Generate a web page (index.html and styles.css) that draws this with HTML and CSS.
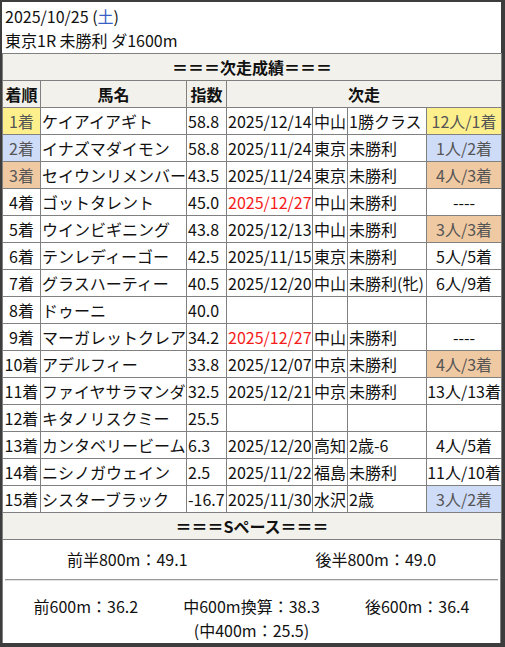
FILE: index.html
```html
<!DOCTYPE html>
<html lang="ja">
<head>
<meta charset="utf-8">
<link rel="stylesheet" href="styles.css">
</head>
<body>
<div class="card">
  <div class="head">
    <div>2025/10/25 (<span class="sat">土</span>)</div>
    <div>東京1R 未勝利 ダ1600m</div>
  </div>
  <table class="res">
    <colgroup>
      <col class="c-rank"><col class="c-name"><col class="c-idx"><col class="c-date"><col class="c-place"><col class="c-race"><col class="c-out">
    </colgroup>
    <thead>
      <tr><th colspan="7">＝＝＝次走成績＝＝＝</th></tr>
      <tr><th>着順</th><th>馬名</th><th>指数</th><th colspan="4">次走</th></tr>
    </thead>
    <tbody>
      <tr><td class="rank y">1着</td><td>ケイアイアギト</td><td>58.8</td><td>2025/12/14</td><td>中山</td><td>1勝クラス</td><td class="out y">12人/1着</td></tr>
      <tr><td class="rank b">2着</td><td>イナズマダイモン</td><td>58.8</td><td>2025/11/24</td><td>東京</td><td>未勝利</td><td class="out b">1人/2着</td></tr>
      <tr><td class="rank t">3着</td><td>セイウンリメンバー</td><td>43.5</td><td>2025/11/24</td><td>東京</td><td>未勝利</td><td class="out t">4人/3着</td></tr>
      <tr><td class="rank">4着</td><td>ゴットタレント</td><td>45.0</td><td class="red">2025/12/27</td><td>中山</td><td>未勝利</td><td class="out">----</td></tr>
      <tr><td class="rank">5着</td><td>ウインビギニング</td><td>43.8</td><td>2025/12/13</td><td>中山</td><td>未勝利</td><td class="out t">3人/3着</td></tr>
      <tr><td class="rank">6着</td><td>テンレディーゴー</td><td>42.5</td><td>2025/11/15</td><td>東京</td><td>未勝利</td><td class="out">5人/5着</td></tr>
      <tr><td class="rank">7着</td><td>グラスハーティー</td><td>40.5</td><td>2025/12/20</td><td>中山</td><td>未勝利(牝)</td><td class="out">6人/9着</td></tr>
      <tr><td class="rank">8着</td><td>ドゥーニ</td><td>40.0</td><td></td><td></td><td></td><td class="out"></td></tr>
      <tr><td class="rank">9着</td><td>マーガレットクレア</td><td>34.2</td><td class="red">2025/12/27</td><td>中山</td><td>未勝利</td><td class="out">----</td></tr>
      <tr><td class="rank">10着</td><td>アデルフィー</td><td>33.8</td><td>2025/12/07</td><td>中京</td><td>未勝利</td><td class="out t">4人/3着</td></tr>
      <tr><td class="rank">11着</td><td>ファイヤサラマンダ</td><td>32.5</td><td>2025/12/21</td><td>中京</td><td>未勝利</td><td class="out">13人/13着</td></tr>
      <tr><td class="rank">12着</td><td>キタノリスクミー</td><td>25.5</td><td></td><td></td><td></td><td class="out"></td></tr>
      <tr><td class="rank">13着</td><td>カンタベリービーム</td><td>6.3</td><td>2025/12/20</td><td>高知</td><td>2歳-6</td><td class="out">4人/5着</td></tr>
      <tr><td class="rank">14着</td><td>ニシノガウェイン</td><td>2.5</td><td>2025/11/22</td><td>福島</td><td>未勝利</td><td class="out">11人/10着</td></tr>
      <tr><td class="rank">15着</td><td>シスターブラック</td><td>-16.7</td><td>2025/11/30</td><td>水沢</td><td>2歳</td><td class="out b">3人/2着</td></tr>
    </tbody>
    <tfoot>
      <tr><th colspan="7">＝＝＝Sペース＝＝＝</th></tr>
    </tfoot>
  </table>
  <div class="pace">
    <div class="halves">
      <div>前半800m：49.1</div>
      <div>後半800m：49.0</div>
    </div>
    <hr class="sep">
    <div class="thirds">
      <div>前600m：36.2</div>
      <div>中600m換算：38.3<br>(中400m：25.5)</div>
      <div>後600m：36.4</div>
    </div>
  </div>
</div>
</body>
</html>
```
FILE: styles.css
```css
html, body {
  margin: 0;
  padding: 0;
  height: 100%;
  overflow: hidden;
}
body {
  background: #3d3d3d;
  font-family: "Noto Sans CJK JP", "Noto Sans", sans-serif;
  font-size: 16px;
  color: #111;
}
.card {
  margin: 2px 0 0 2px;
  width: 499px;
  height: 641px;
  background: #fff;
  display: flex;
  flex-direction: column;
}
.head {
  padding: 2px 3px 1px;
  line-height: 24px;
}
.sat { color: #3a5fc4; }
.res {
  width: 499px;
  border-collapse: collapse;
  table-layout: fixed;
}
.c-rank { width: 38px; }
.c-name { width: 146px; }
.c-idx { width: 40px; }
.c-date { width: 86px; }
.c-place { width: 35px; }
.c-race { width: 79px; }
.c-out { width: 75px; }
.res th, .res td {
  border: 1px solid #808080;
  padding: 1px 1px;
  line-height: 24px;
  height: 24px;
  white-space: nowrap;
  overflow: hidden;
  text-align: left;
}
.res th {
  background: #f2f1ec;
  font-weight: bold;
  text-align: center;
}
.res td.rank, .res td.out { text-align: center; padding: 1px 0; }
.y { background: #fdf08c; color: #555; }
.b { background: #cfdcf8; color: #555; }
.t { background: #efc9a2; color: #555; }
.red { color: #f51c1c; }
.pace {
  flex: 1;
  border-left: 1px solid #808080;
  border-right: 1px solid #808080;
  line-height: 24px;
}
.halves {
  display: grid;
  grid-template-columns: 1fr 1fr;
  text-align: center;
  padding: 7px 0 8px;
}
.sep {
  margin: 0 2px;
  border: 0;
  border-top: 1px solid #9a9a9a;
  border-bottom: 1px solid #e2e2e2;
  height: 0;
}
.thirds {
  display: grid;
  grid-template-columns: 1fr 1fr 1fr;
  text-align: center;
  padding-top: 13px;
}
```
